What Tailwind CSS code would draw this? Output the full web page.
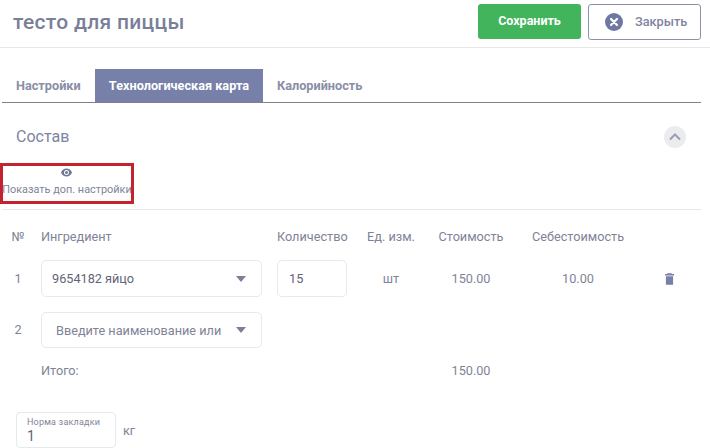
<!doctype html>
<html lang="ru"><head><meta charset="utf-8"><script src="https://cdn.jsdelivr.net/npm/@tailwindcss/browser@4"></script></head>
<body class="bg-white font-['Roboto',sans-serif] w-[710px] h-[448px] overflow-hidden text-[#7f8398]">
<header class="h-[48px] border-b border-[#e6e8ec] flex items-start justify-between pl-[13px] pr-[9px] pt-[4px]">
  <h1 class="text-[21px] leading-[36px] font-medium text-[#7a7f99] tracking-[0.3px]">тесто для пиццы</h1>
  <div class="flex gap-[7px]">
    <button class="w-[103px] h-[35px] rounded-[3px] bg-[#41b45c] text-white text-[12.5px] font-bold">Сохранить</button>
    <button class="w-[113px] h-[36px] rounded-[3px] border border-[#8e92a8] flex items-center pl-[16px] gap-[12px] text-[12.7px] font-medium text-[#7f83a0]">
      <svg width="18" height="18" viewBox="0 0 18 18"><circle cx="9" cy="9" r="9" fill="#6f78a3"/><path d="M6 6l6 6M12 6l-6 6" stroke="#fff" stroke-width="2.2" stroke-linecap="round"/></svg>
      Закрыть</button>
  </div>
</header>
<nav class="mt-[21px] mx-[2px] w-[699px] h-[34px] border-b border-[#80838f] flex text-[12.7px] font-bold">
  <span class="w-[93px] pl-[14px] leading-[33px] text-[#8a8ea6]">Настройки</span>
  <span class="w-[168px] h-[33px] bg-[#7680a8] text-white text-center leading-[33px]">Технологическая карта</span>
  <span class="pl-[14px] leading-[33px] text-[#8a8ea6]">Калорийность</span>
</nav>
<section class="mt-[20px] pl-[16px] pr-[24px] h-[28px] flex items-center justify-between">
  <h2 class="text-[16px] text-[#7b84a1]">Состав</h2>
  <span class="w-[22px] h-[22px] rounded-full bg-[#ebecf0] flex items-center justify-center"><svg width="12" height="8" viewBox="0 0 12 8"><path d="M1 6.500l5-5 5 5" fill="none" stroke="#9a9eb3" stroke-width="2"/></svg></span>
</section>
<div class="mt-[12px] w-[134px] h-[41px] border-[3px] border-[#c4222f] flex flex-col items-center text-[10.9px] leading-[14px] whitespace-nowrap">
  <svg class="mt-[2px] mr-[2px]" width="11" height="9" viewBox="0 0 22 16"><path fill-rule="evenodd" d="M11 0C6 0 2 3.200 0 8c2 4.800 6 8 11 8s9-3.200 11-8c-2-4.800-6-8-11-8zm0 13a5 5 0 1 1 0-10 5 5 0 0 1 0 10zm0-8a3 3 0 1 0 0 6 3 3 0 0 0 0-6z" fill="#6f7795"/></svg>
  <span class="mt-[6px]">Показать доп. настройки</span>
</div>
<div class="mt-[5px] mx-[2px] w-[699px] border-t border-[#e6e8ec]"></div>
<div class="grid grid-cols-[41px_236px_78px_72px_88px_126px_56px] items-center text-[12.7px] mt-[17px]">
  <div class="pr-[5px] text-center">№</div><div>Ингредиент</div><div>Количество</div><div class="text-center">Ед. изм.</div><div class="text-center">Стоимость</div><div class="text-center">Себестоимость</div><div></div>
  <div class="pr-[5px] text-center h-[37px] mt-[14px] leading-[37px]">1</div>
  <div class="mt-[14px] w-[221px] h-[37px] rounded-[5px] border border-[#e8e9ee] flex items-center justify-between pl-[10px] pr-[15px] text-[#5f6478]">9654182 яйцо<svg width="10" height="6"><path d="M0 0h10L5 6z" fill="#7b7f98"/></svg></div>
  <div class="mt-[14px] w-[70px] h-[37px] rounded-[5px] border border-[#e8e9ee] flex items-center pl-[11px] text-[#5f6478]">15</div>
  <div class="mt-[14px] text-center">шт</div><div class="mt-[14px] text-center">150.00</div><div class="mt-[14px] text-center">10.00</div>
  <div class="mt-[14px] flex justify-center"><svg width="9" height="12" viewBox="0 0 10 13"><path d="M3 0h4l1 1h2v1.500H0V1h2zM1 3.500h8V12a1 1 0 0 1-1 1H2a1 1 0 0 1-1-1z" fill="#7680a8"/></svg></div>
  <div class="pr-[5px] text-center mt-[15px] h-[36px] leading-[36px]">2</div>
  <div class="mt-[15px] w-[221px] h-[36px] rounded-[5px] border border-[#e8e9ee] flex items-center justify-between pl-[14px] pr-[15px] whitespace-nowrap">Введите наименование или<svg width="10" height="6"><path d="M0 0h10L5 6z" fill="#7b7f98"/></svg></div>
  <div class="col-span-5"></div>
  <div class="mt-[14px]"></div><div class="mt-[14px] leading-[17px]">Итого:</div><div class="mt-[14px]"></div><div class="mt-[14px]"></div><div class="mt-[14px] text-center leading-[17px]">150.00</div>
</div>
<div class="mt-[33px] ml-[16px] flex items-center gap-[7px] text-[12.7px]">
  <div class="w-[100px] h-[36px] rounded-[4px] border border-[#e8e9ee] pl-[10px] pt-[4px]">
    <div class="text-[9px] leading-[11px] tracking-[0.2px]">Норма закладки</div><div class="mt-[1px] text-[14px] leading-[15px] text-[#5f6478]">1</div>
  </div>
  <span>кг</span>
</div>
</body></html>
